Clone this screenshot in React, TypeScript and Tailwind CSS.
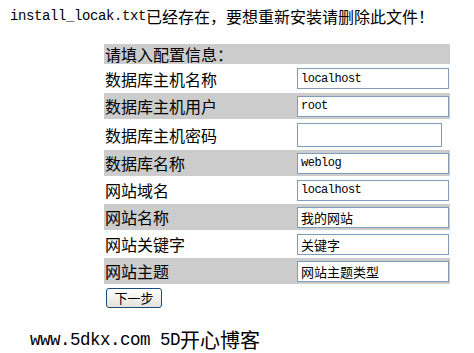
import React from "react";

type Row = { label: string; value: string; gray: boolean; h: string; password?: boolean };

const rows: Row[] = [
  { label: "数据库主机名称", value: "localhost", gray: false, h: "h-[29px]" },
  { label: "数据库主机用户", value: "root", gray: true, h: "h-[26px]" },
  { label: "数据库主机密码", value: "", gray: false, h: "h-[31px]", password: true },
  { label: "数据库名称", value: "weblog", gray: true, h: "h-[26px]" },
  { label: "网站域名", value: "localhost", gray: false, h: "h-[28px]" },
  { label: "网站名称", value: "我的网站", gray: true, h: "h-[26px]" },
  { label: "网站关键字", value: "关键字", gray: false, h: "h-[28px]" },
  { label: "网站主题", value: "网站主题类型", gray: true, h: "h-[26px]" },
];

const cjk = "font-['Noto_Sans_CJK_SC',sans-serif]";

export default function App() {
  return (
    <div className="w-[474px] h-[353px] bg-white text-black overflow-hidden">
      <div className="pt-[7px] pl-[10px] h-[25px] leading-[18px] whitespace-nowrap flex items-center">
        <span className="font-['Liberation_Mono',monospace] text-[14px] tracking-[-0.4px]">install_locak.txt</span>
        <span className={`${cjk} text-[16px]`}>已经存在，要想重新安装请删除此文件！</span>
      </div>
      <div className="ml-[104px] mt-[19px] w-[346px] flex flex-col">
        <div className={`h-[20px] bg-[#cccccc] flex items-center pl-[1px] text-[16px] leading-[20px] ${cjk}`}>
          请填入配置信息：
        </div>
        {rows.map((r) => {
          const latin = /^[\x00-\x7f]*$/.test(r.value);
          return (
            <div key={r.label} className={`${r.h} flex items-center ${r.gray ? "bg-[#cccccc]" : "bg-white"}`}>
              <div className={`w-[190px] pl-[1px] text-[16px] leading-[20px] ${cjk}`}>{r.label}</div>
              <div className="ml-[3px] flex items-center">
                <input
                  readOnly
                  type={r.password ? "password" : "text"}
                  value={r.value}
                  className={
                    r.password
                      ? "w-[145px] h-[24px] border border-[#7f9db9] bg-white outline-none"
                      : latin
                      ? "w-[152px] h-[21px] border border-[#7f9db9] bg-white px-[3px] outline-none font-['Liberation_Mono',monospace] text-[12px] tracking-[-0.5px] text-black"
                      : "w-[152px] h-[21px] border border-[#7f9db9] bg-white px-[3px] outline-none font-['Noto_Sans_CJK_SC',sans-serif] text-[13px] text-black"
                  }
                />
              </div>
            </div>
          );
        })}
        <div className="mt-[4px] ml-[2px]">
          <button
            className={`w-[56px] h-[20px] rounded-[3px] border border-[#1c4a7a] bg-gradient-to-b from-white to-[#e4e4dc] text-[13px] leading-[16px] ${cjk} flex items-center justify-center`}
          >
            下一步
          </button>
        </div>
      </div>
      <div className="mt-[20px] ml-[30px] h-[24px] flex items-center whitespace-nowrap">
        <span className="font-['Liberation_Mono',monospace] text-[17.5px] tracking-[-0.5px]">www.5dkx.com 5D</span>
        <span className={`${cjk} text-[20px]`}>开心博客</span>
      </div>
    </div>
  );
}
